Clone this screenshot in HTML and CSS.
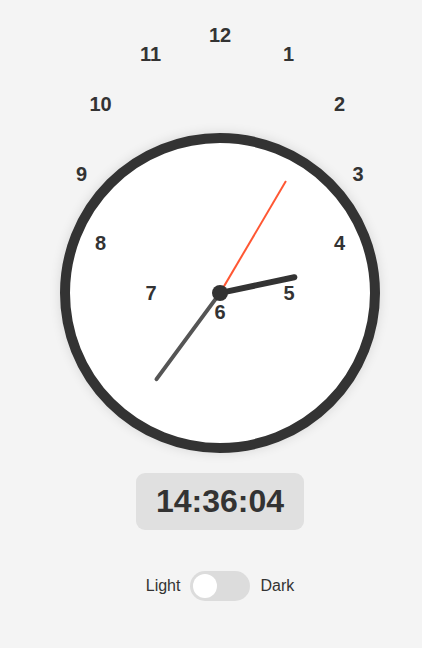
FILE: index.html
```html
<!DOCTYPE html>
<html lang="en">
<head>
<meta charset="utf-8">
<title>Clock</title>
<link rel="stylesheet" href="styles.css">
</head>
<body>
<main class="page">
  <div class="numbers">
    <span class="num n12">12</span>
    <span class="num n1">1</span>
    <span class="num n2">2</span>
    <span class="num n3">3</span>
    <span class="num n4">4</span>
    <span class="num n5">5</span>
    <span class="num n6">6</span>
    <span class="num n7">7</span>
    <span class="num n8">8</span>
    <span class="num n9">9</span>
    <span class="num n10">10</span>
    <span class="num n11">11</span>
  </div>
  <div class="clock">
    <div class="hand hour"></div>
    <div class="hand minute"></div>
    <div class="hand second"></div>
    <div class="pivot"></div>
  </div>
  <div class="digital">14:36:04</div>
  <div class="theme">
    <span class="label">Light</span>
    <span class="switch"><span class="knob"></span></span>
    <span class="label">Dark</span>
  </div>
</main>
</body>
</html>
```

FILE: styles.css
```css
html, body {
  margin: 0;
  padding: 0;
  background: #f4f4f4;
  font-family: "Liberation Sans", Arial, sans-serif;
  color: #333;
}

.page {
  position: relative;
  box-sizing: border-box;
  width: 422px;
  min-height: 648px;
  padding: 133px 0 0 18px;
  display: flex;
  flex-direction: column;
  align-items: center;
}

.numbers {
  position: absolute;
  left: 0;
  top: 0;
  width: 0;
  height: 0;
  z-index: 2;
}

.num {
  position: absolute;
  transform: translate(-50%, -50%);
  font-size: 20px;
  font-weight: bold;
  line-height: 1;
  color: #333;
}

.n12 { left: 220px; top: 35px; }
.n1  { left: 288.5px; top: 53.5px; }
.n2  { left: 339.5px; top: 103.5px; }
.n3  { left: 358px; top: 173.5px; }
.n4  { left: 339.5px; top: 242.5px; }
.n5  { left: 289px; top: 293px; }
.n6  { left: 220px; top: 311.5px; }
.n7  { left: 151px; top: 293px; }
.n8  { left: 100.5px; top: 242.5px; }
.n9  { left: 81.5px; top: 173.5px; }
.n10 { left: 100.5px; top: 103.5px; }
.n11 { left: 150.5px; top: 53.5px; }

.clock {
  position: relative;
  box-sizing: border-box;
  width: 320px;
  height: 320px;
  border: 10px solid #333;
  border-radius: 50%;
  background: #fff;
  box-shadow: 0 0 12px rgba(0, 0, 0, 0.12);
}

.hand {
  position: absolute;
  left: 50%;
  bottom: 50%;
  transform-origin: 50% 100%;
  border-radius: 4px;
}

.hour {
  width: 6px;
  height: 79px;
  margin-left: -3px;
  background: #333;
  transform: rotate(78deg);
  z-index: 1;
}

.minute {
  width: 4px;
  height: 109px;
  margin-left: -2px;
  background: #555;
  transform: rotate(216.4deg);
  z-index: 1;
}

.second {
  width: 1.5px;
  height: 130px;
  margin-left: -0.75px;
  background: #ff5733;
  transform: rotate(30.5deg);
  border-radius: 0;
  z-index: 2;
}

.pivot {
  position: absolute;
  left: 50%;
  top: 50%;
  width: 16px;
  height: 16px;
  margin: -8px 0 0 -8px;
  border-radius: 50%;
  background: #333;
  z-index: 3;
}

.digital {
  margin-top: 20px;
  box-sizing: border-box;
  height: 57px;
  padding: 10px 20px;
  border-radius: 9px;
  background: #e0e0e0;
  font-size: 32px;
  font-weight: bold;
  line-height: 37px;
  color: #333;
}

.theme {
  margin-top: 41px;
  display: flex;
  align-items: center;
  gap: 10px;
}

.label {
  font-size: 16px;
  color: #333;
}

.switch {
  position: relative;
  box-sizing: border-box;
  width: 60px;
  height: 30px;
  padding: 3px;
  border-radius: 15px;
  background: #dcdcdc;
  display: flex;
}

.knob {
  width: 24px;
  height: 24px;
  border-radius: 50%;
  background: #fff;
}
```
